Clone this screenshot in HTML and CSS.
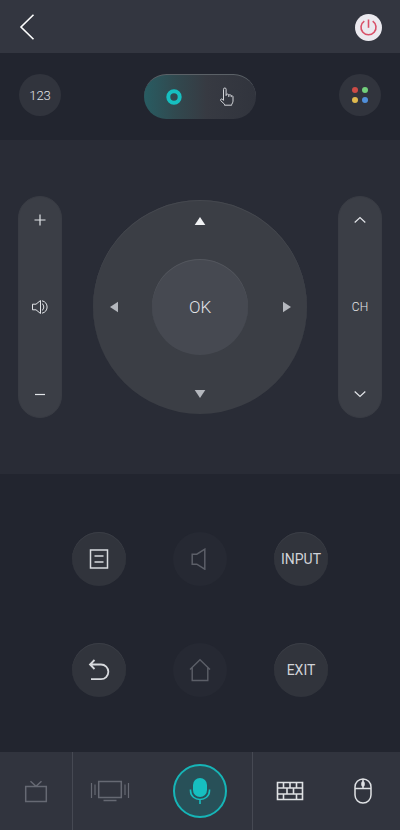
FILE: index.html
```html
<!DOCTYPE html>
<html lang="en">
<head>
<meta charset="utf-8">
<meta name="viewport" content="width=device-width, initial-scale=1">
<title>TV Remote</title>
<link rel="stylesheet" href="styles.css">
</head>
<body>
<div class="remote">
  <header class="topbar">
    <button class="back" type="button" aria-label="Back">
      <svg width="16" height="28" viewBox="0 0 16 28" fill="none" stroke="#fff" stroke-width="1.6"><path d="M14.500 1.800 2 14l12.500 12.200"/></svg>
    </button>
    <button class="power" type="button" aria-label="Power">
      <svg width="27" height="27" viewBox="0 0 27 27" fill="none" stroke="#d95068" stroke-width="1.600"><path d="M9.300 7.100a7.500 7.500 0 1 0 8.400 0"/><path d="M13.500 5.500v8.300"/></svg>
    </button>
  </header>

  <section class="tools">
    <button class="chip" type="button">123</button>
    <div class="mode" role="radiogroup" aria-label="Control mode">
      <label class="mode-option">
        <input type="radio" name="mode" aria-label="Buttons" checked>
        <svg width="18" height="18" viewBox="0 0 18 18"><circle cx="9" cy="9" r="5.700" fill="none" stroke="#16bfc0" stroke-width="4"/></svg>
      </label>
      <label class="mode-option">
        <input type="radio" name="mode" aria-label="Touch">
        <svg width="16" height="22" viewBox="0 0 16 22" fill="none" stroke="#d4d6da" stroke-width="1" stroke-linejoin="round"><path d="M4.500 13V3.300a1.300 1.300 0 0 1 2.600 0V10M7.100 8.800c.4-1 2.300-1 2.700.2V11M9.800 9.300c.5-.9 2.200-.7 2.400.3v1.500M12.200 10c1-.6 1.800 0 1.800.9v4.300c0 1.200-.7 2-1.300 3.200v.8H5.500v-1L1.600 14.500c-.5-.9.6-2 1.700-1.300l1.200 1.200V12"/></svg>
      </label>
    </div>
    <button class="chip" type="button" aria-label="Color keys">
      <svg width="18" height="18" viewBox="0 0 18 18"><circle cx="4" cy="4" r="3" fill="#cc4b46"/><circle cx="14" cy="4" r="3" fill="#72cf7b"/><circle cx="4" cy="14" r="3" fill="#dfb94e"/><circle cx="14" cy="14" r="3" fill="#508fda"/></svg>
    </button>
  </section>

  <main class="pad">
    <div class="rocker" role="group" aria-label="Volume">
      <button type="button" aria-label="Volume up"><svg width="12" height="12" viewBox="0 0 12 12" fill="none" stroke="#e2e4e8" stroke-width="1.200"><path d="M.5 6h11M6 .5v11"/></svg></button>
      <svg width="18" height="16" viewBox="0 0 18 16" fill="none" stroke="#e2e4e8" stroke-width="1"><path d="M1.500 5.200H5L9.500 1.500v13L5 10.800H1.500zM11 4.500c2.300 1.600 2.300 5.400 0 7M11 1.800c6.800 1.200 6.800 11.200 0 12.400"/></svg>
      <button type="button" aria-label="Volume down"><svg width="12" height="12" viewBox="0 0 12 12" fill="none" stroke="#e2e4e8" stroke-width="1.200"><path d="M1 6.500h10"/></svg></button>
    </div>

    <div class="dial">
      <button class="up" type="button" aria-label="Up"><svg width="12" height="10" viewBox="0 0 12 10"><path fill="#f0f1f3" d="M6 1l5.300 8H.7z"/></svg></button>
      <button class="left" type="button" aria-label="Left"><svg width="10" height="12" viewBox="0 0 10 12"><path fill="#b4b7bd" d="M1 6l8-5.300v10.600z"/></svg></button>
      <button class="ok" type="button">OK</button>
      <button class="right" type="button" aria-label="Right"><svg width="10" height="12" viewBox="0 0 10 12"><path fill="#b4b7bd" d="M9 6L1 .7v10.600z"/></svg></button>
      <button class="down" type="button" aria-label="Down"><svg width="12" height="10" viewBox="0 0 12 10"><path fill="#b4b7bd" d="M6 9L.7 1h10.600z"/></svg></button>
    </div>

    <div class="rocker" role="group" aria-label="Channel">
      <button type="button" aria-label="Channel up"><svg width="12" height="8" viewBox="0 0 12 8" fill="none" stroke="#e2e4e8" stroke-width="1.200"><path d="M.7 6.500L6 1.500l5.300 5"/></svg></button>
      <span class="rocker-name">CH</span>
      <button type="button" aria-label="Channel down"><svg width="12" height="8" viewBox="0 0 12 8" fill="none" stroke="#e2e4e8" stroke-width="1.200"><path d="M.7 1.500l5.300 5 5.300-5"/></svg></button>
    </div>
  </main>

  <section class="keys">
    <button class="key" type="button" aria-label="Menu">
      <svg width="20" height="20" viewBox="0 0 20 20" fill="none" stroke="#d8dade" stroke-width="1.500"><path d="M1.500 1h17v18h-17zM5.500 7h9M5.500 13h9"/></svg>
    </button>
    <button class="key" type="button" aria-label="Mute" disabled>
      <svg width="20" height="22" viewBox="0 0 20 22" fill="none" stroke="#5c5f68" stroke-width="1.500"><path d="M2.200 6.200h4.600l8-5v20l-8-5H2.200z"/></svg>
    </button>
    <button class="key" type="button">INPUT</button>
    <button class="key" type="button" aria-label="Return">
      <svg width="22" height="22" viewBox="0 0 22 22" fill="none" stroke="#d8dade" stroke-width="1.800"><path d="M6.500 1L2 5.500 6.500 10M2.500 5.500H13a7.300 7.300 0 0 1 0 14.700H3"/></svg>
    </button>
    <button class="key" type="button" aria-label="Home" disabled>
      <svg width="22" height="24" viewBox="0 0 22 24" fill="none" stroke="#5c5f68" stroke-width="1.400"><path d="M1 11.500L11 1.800l10 9.700M3.200 9.500v13h15.600v-13"/></svg>
    </button>
    <button class="key" type="button">EXIT</button>
  </section>

  <nav class="dock" aria-label="Remote modes">
    <button type="button" aria-label="TV" disabled>
      <svg width="24" height="24" viewBox="0 0 24 24" fill="none" stroke="#666973" stroke-width="1.500"><path d="M1.700 7.500h20.600v15H1.700zM6.500 2.200l5.500 5 5.500-5"/></svg>
    </button>
    <button class="divided" type="button" aria-label="Screen share" disabled>
      <svg width="40" height="22" viewBox="0 0 40 22" fill="none" stroke="#666973" stroke-width="1.500"><path d="M8.700 1.500h22.600v16H8.700zM13.500 20.500h13"/><path stroke-width="1.200" d="M1.500 3v15M5 4.500V15M35 4.500V15M38.500 3v15"/></svg>
    </button>
    <button type="button" aria-label="Voice">
      <span class="mic"><svg width="22" height="28" viewBox="0 0 22 28" fill="none" stroke="#16bfc0" stroke-width="1.600"><rect x="4" y="1" width="14" height="19" rx="7" fill="#16bfc0" stroke="none"/><path d="M1.500 12.500v1c0 12 19 12 19 0v-1M11 22.500v4.500"/></svg></span>
    </button>
    <button class="divided" type="button" aria-label="Keyboard">
      <svg width="28" height="20" viewBox="0 0 28 20" fill="none" stroke="#dfe1e4" stroke-width="1.600"><path d="M1.500 1.500h25v17h-25zM1.500 7h25M1.500 13h25M7.500 1.500V7M14 1.500V7M20.500 1.500V7M11 7v6M17.500 7v6M7.500 13v5.500M20.500 13v5.500"/></svg>
    </button>
    <button type="button" aria-label="Mouse">
      <svg width="18" height="26" viewBox="0 0 18 26" fill="none" stroke="#dfe1e4" stroke-width="1.500"><rect x="1" y="1" width="16" height="24" rx="8"/><path d="M1 10.500h16M9 1v9.500"/><rect x="8" y="4" width="2" height="4" rx="1" fill="#dfe1e4"/></svg>
    </button>
  </nav>
</div>
</body>
</html>
```
FILE: styles.css
```css
* {
  box-sizing: border-box;
}

body {
  margin: 0;
  background: #22252f;
  color: #e2e4e8;
  font-family: Roboto, "Liberation Sans", sans-serif;
  font-weight: 300;
}

button {
  display: flex;
  align-items: center;
  justify-content: center;
  margin: 0;
  padding: 0;
  border: 0;
  background: none;
  color: inherit;
  font: inherit;
}

svg {
  display: block;
}

.remote {
  display: flex;
  flex-direction: column;
  min-height: 100vh;
}

.topbar {
  display: flex;
  align-items: center;
  justify-content: space-between;
  padding: 13px 18px 12px 19px;
  background: #333640;
}

.power {
  border-radius: 50%;
  background: #ebe9ef;
}

.tools {
  display: flex;
  align-items: flex-start;
  justify-content: space-between;
  padding: 21px 19px;
}

.chip {
  width: 42px;
  height: 42px;
  border-radius: 50%;
  background: #31343d;
  font-size: 13px;
}

.mode {
  display: grid;
  grid-template-columns: 1fr 1fr;
  width: 112px;
  height: 45px;
  padding: 0 3px;
  border-top: 1px solid #5b6167;
  border-radius: 23px;
  background: linear-gradient(90deg, #285c62 0%, #31494f 28%, #373a42 56%, #31343d 100%);
}

.mode-option {
  display: flex;
  align-items: center;
  justify-content: center;
}

.mode-option input {
  appearance: none;
  width: 0;
  height: 0;
  margin: 0;
}

.pad {
  display: flex;
  align-items: center;
  justify-content: space-between;
  padding: 56px 18px;
  background: #292c36;
}

.rocker {
  display: flex;
  flex-direction: column;
  align-items: center;
  justify-content: space-between;
  width: 44px;
  height: 222px;
  border: 1px solid #393c44;
  border-radius: 22px;
  background: #3b3e46;
}

.rocker button {
  width: 100%;
  height: 46px;
}

.rocker-name {
  font-size: 12px;
}

.dial {
  display: grid;
  grid-template: 1fr 96px 1fr / 1fr 96px 1fr;
  width: 214px;
  height: 214px;
  border-radius: 50%;
  background: #3b3e45;
  box-shadow: inset 0 1px #45484f;
}

.up {
  grid-area: 1 / 2;
  padding-bottom: 18px;
}

.left {
  grid-area: 2 / 1;
  padding-right: 18px;
}

.ok {
  grid-area: 2 / 2;
  border-radius: 50%;
  background: #464951;
  box-shadow: inset 0 1px #53565d;
  font-size: 17px;
}

.right {
  grid-area: 2 / 3;
  padding-left: 18px;
}

.down {
  grid-area: 3 / 2;
  padding-top: 18px;
}

.keys {
  display: grid;
  flex: 1;
  grid-template-columns: repeat(3, 54px);
  align-content: center;
  justify-content: center;
  gap: 57px 47px;
  padding: 58px 0 55px;
}

.key {
  width: 54px;
  height: 54px;
  border-radius: 50%;
  background: #31343c;
  box-shadow: inset 0 1px #3b3e46;
  color: #d0d2d8;
  font-size: 14px;
  font-weight: 400;
}

.key:disabled {
  background: #262933;
  box-shadow: none;
}

.dock {
  display: grid;
  grid-template-columns: 72fr 75fr 105fr 74fr 74fr;
  height: 78px;
  background: #31343e;
}

.divided {
  border-left: 1px solid #464953;
}

.mic {
  display: flex;
  align-items: center;
  justify-content: center;
  width: 54px;
  height: 54px;
  border: 2px solid #16b5b7;
  border-radius: 50%;
  background: #285058;
}
```
